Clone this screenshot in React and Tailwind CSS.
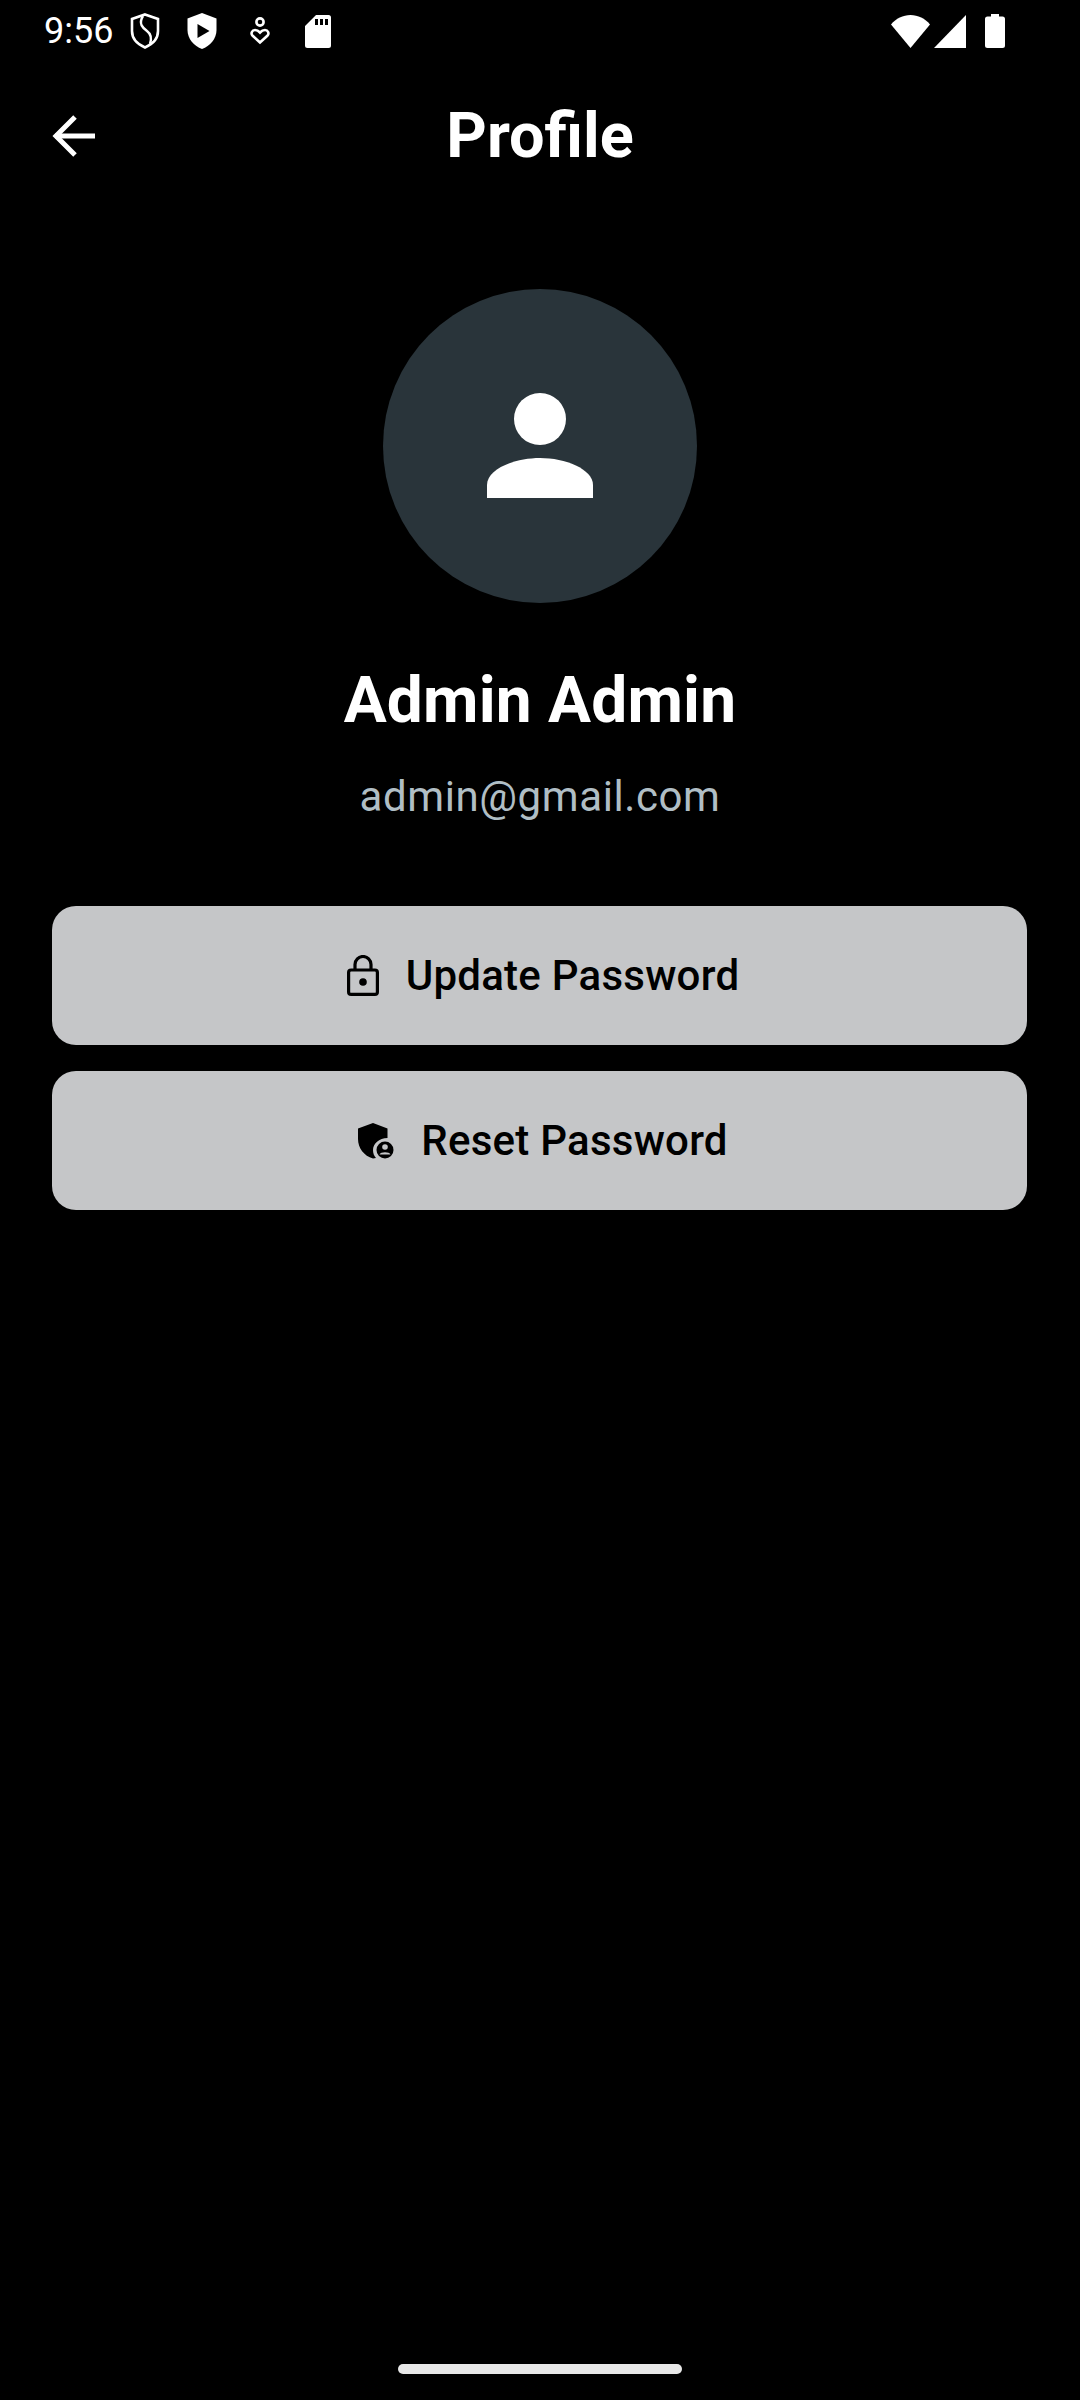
import React from 'react';

const ShieldOutline = () => (
    <svg width="30" height="36" viewBox="0 0 30 36" fill="none" stroke="white">
        <path d="M15 1.5 L28 6 V18 C28 26 22 31.5 15 34.5 C8 31.5 2 26 2 18 V6 Z" strokeWidth="2.6" />
        <path d="M13 3 C8 11 13 15 17 18 C21 21 22 25 20 31" strokeWidth="2.4" />
    </svg>
);

const ShieldPlay = () => (
    <svg width="30" height="36" viewBox="0 0 30 36">
        <path d="M15 0 L29.5 5.5 V17 C29.5 26 23 33 15 36 C7 33 .5 26 .5 17 V5.5 Z" fill="white" />
        <path d="M10.5 11 L22.5 18 L10.5 25 Z" fill="black" strokeLinejoin="round" />
    </svg>
);

const HeartPerson = () => (
    <svg width="20" height="28" viewBox="0 0 20 28" fill="none" stroke="white" strokeWidth="2.6">
        <circle cx="10" cy="5" r="3.6" />
        <path d="M10 25.5 L2.4 18.5 C0.6 16.5 2 13 5 13 C7.2 13 8.6 14 10 15.5 C11.4 14 12.8 13 15 13 C18 13 19.4 16.5 17.6 18.5 Z" />
    </svg>
);

const SdCard = () => (
    <svg width="26" height="33" viewBox="0 0 26 33">
        <path d="M11 0 H23.5 A2.5 2.5 0 0 1 26 2.5 V30.5 A2.5 2.5 0 0 1 23.5 33 H2.5 A2.5 2.5 0 0 1 0 30.5 V11 Z" fill="white" />
        <path d="M10 4 H13 V10 H10 Z M15 4 H18 V10 H15 Z M20 4 H23 V10 H20 Z" fill="black" />
    </svg>
);

const Wifi = () => (
    <svg width="39" height="33" viewBox="0 0 39 33">
        <path d="M19.5 33 L0 9.500 C5 3.500 12 0 19.5 0 C27 0 34 3.500 39 9.500 Z" fill="white" />
    </svg>
);

const Signal = () => (
    <svg width="32" height="33" viewBox="0 0 32 33">
        <path d="M32 0 V33 H0 Z" fill="white" />
    </svg>
);

const Battery = () => (
    <svg width="20" height="34" viewBox="0 0 20 34">
        <path d="M6 0 H14 V2.500 H17.500 A2.500 2.500 0 0 1 20 5 V31.500 A2.500 2.500 0 0 1 17.500 34 H2.500 A2.500 2.500 0 0 1 0 31.500 V5 A2.500 2.500 0 0 1 2.500 2.500 H6 Z" fill="white" />
    </svg>
);

const BackArrow = () => (
    <svg width="44" height="42" viewBox="0 0 44 42" fill="none" stroke="white" strokeWidth="5">
        <path d="M43 21 H3" />
        <path d="M23 2 L4 21 L23 40" />
    </svg>
);

const PersonIcon = () => (
    <svg width="106" height="106" viewBox="0 0 106 106" fill="white">
        <circle cx="53" cy="26" r="26" />
        <path d="M0 105 V92 C0 76 28 65 53 65 C78 65 106 76 106 92 V105 Z" />
    </svg>
);

const LockIcon = () => (
    <svg width="32" height="41" viewBox="0 0 32 41" fill="none" stroke="black" strokeWidth="3.2">
        <rect x="1.600" y="15" width="28.800" height="24.400" rx="2.500" />
        <path d="M8 15 V9.500 A8 8 0 0 1 24 9.500 V15" />
        <circle cx="16" cy="27" r="3.800" fill="black" stroke="none" />
    </svg>
);

const ShieldPersonIcon = () => (
    <svg width="36" height="36" viewBox="0 0 36 36">
        <path d="M15 0 L29.500 5.500 V15 C21 15 15 21 15 27 C15 30 16 33 18 35 L15 35.500 C6 33 0 25 0 16 V5.500 Z" fill="black" />
        <circle cx="27" cy="27" r="8.500" fill="black" />
        <circle cx="27" cy="24" r="2.800" fill="#c5c6c8" />
        <path d="M21.500 31.500 C22.500 28.500 31.500 28.500 32.500 31.500 Z" fill="#c5c6c8" />
    </svg>
);

const ActionButton = ({ icon, label }) => (
    <button className="flex h-[139px] w-full items-center justify-center gap-[27px] rounded-[24px] bg-[#c5c6c8] pl-[7px] text-[42px] font-medium tracking-[0.25px] text-black">
        {icon}
        <span>{label}</span>
    </button>
);

export default function App() {
    return (
        <div className="flex h-[2400px] w-[1080px] flex-col items-center overflow-hidden bg-black font-['Roboto',sans-serif] text-white">
            {/* Status bar */}
            <div className="flex h-[62px] w-full shrink-0 items-center justify-between pl-[44px] pr-[75px]">
                <div className="flex items-center">
                    <span className="w-[70px] text-[36px] leading-none font-normal">9:56</span>
                    <div className="ml-[16px] flex items-center gap-[27px]">
                        <ShieldOutline />
                        <ShieldPlay />
                        <div className="mr-[8px] ml-[6px]"><HeartPerson /></div>
                        <SdCard />
                    </div>
                </div>
                <div className="flex items-center gap-[4px]">
                    <Wifi />
                    <Signal />
                    <div className="ml-[15px]"><Battery /></div>
                </div>
            </div>

            {/* App bar */}
            <div className="relative flex h-[146px] w-full shrink-0 items-center justify-center">
                <button className="absolute top-[53px] left-[52px]">
                    <BackArrow />
                </button>
                <h1 className="text-[63px] leading-none font-bold">Profile</h1>
            </div>

            {/* Avatar */}
            <div className="mt-[81px] flex h-[314px] w-[314px] shrink-0 items-center justify-center rounded-full bg-[#29343a]">
                <PersonIcon />
            </div>

            <h2 className="mt-[60px] text-[64px] leading-[76px] font-bold tracking-[0.2px]">Admin Admin</h2>
            <p className="mt-[33px] text-[42px] leading-[50px] tracking-[0.6px] text-[#b0bec5]">admin@gmail.com</p>

            {/* Actions */}
            <div className="mt-[84px] flex w-full flex-col gap-[26px] pr-[53px] pl-[52px]">
                <ActionButton icon={<LockIcon />} label="Update Password" />
                <ActionButton icon={<ShieldPersonIcon />} label="Reset Password" />
            </div>

            {/* Home indicator */}
            <div className="mt-auto mb-[26px] h-[10px] w-[284px] rounded-full bg-[#e8e8e8]" />
        </div>
    );
}
